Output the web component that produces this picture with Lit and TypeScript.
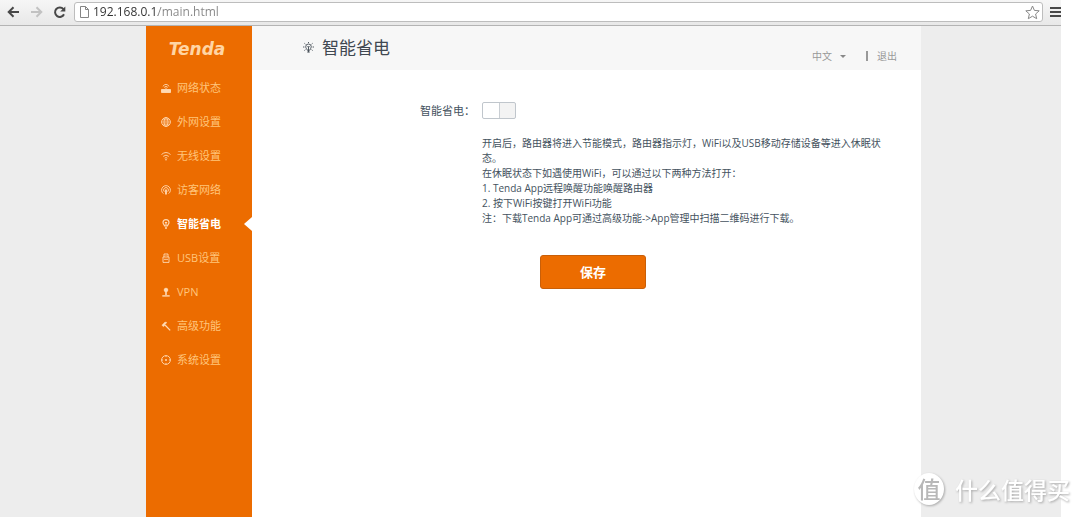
import { LitElement, html, css, svg } from "lit";
import { customElement, state } from "lit/decorators.js";
import { classMap } from "lit/directives/class-map.js";

const icons: Record<string, unknown> = {
  status: svg`<path d="M.5 6.5h9V9.5h-9z" fill="currentColor"/><path d="M5 6.5V4.6M1.8 3.4q3.2-4 6.4 0M3.2 4.4q1.8-2.2 3.6 0"/>`,
  wan: svg`<circle cx="5" cy="5" r="4.4"/><ellipse cx="5" cy="5" rx="2" ry="4.4"/><path d="M.6 5h8.8M5 .6v8.8M1.4 2.8h7.2M1.4 7.2h7.2" stroke-width=".5"/>`,
  wifi: svg`<path d="M.5 3.5q4.5-4 9 0M2.2 5.4q2.8-2.5 5.6 0M3.7 7.2q1.3-1.2 2.6 0"/><circle cx="5" cy="8.7" r=".8" fill="currentColor" stroke="none"/>`,
  guest: svg`<path d="M2.4 8.6a4.4 4.4 0 1 1 5.2 0M3.3 6.7a2.4 2.4 0 1 1 3.4 0"/><path d="M5 4.4v5" stroke-width="1.8"/>`,
  power: svg`<path d="M3.6 7C3.4 5.8 2 5.2 2 3.6a3 3 0 0 1 6 0C8 5.2 6.6 5.8 6.4 7zM5 3v3.8M4 3.2l1 1 1-1" stroke-width="1.1"/><path d="M4 9h2" stroke-width="1.3"/>`,
  usb: svg`<path d="M3 4V1h4v3M2 4h6v5.4H2zM4.2 2.5h.4M5.6 2.5h.4M3 6.3h4"/>`,
  vpn: svg`<circle cx="5" cy="3" r="1.8" fill="currentColor"/><path d="M5 4v4" stroke-width="1.6"/><path d="M1.3 8.9h7.4" stroke-width="1.4"/>`,
  advanced: svg`<path d="M.8 4.2 4 1l2 .5-2.1 1.9.1.8-1.5 1.5z" fill="currentColor" stroke-width=".4"/><path d="m4 4 5.2 5.4" stroke-width="1.2"/>`,
  system: svg`<circle cx="5" cy="5" r="4.4"/><circle cx="5" cy="5" r="1" fill="currentColor" stroke="none"/><path d="M5 .5v1.6M5 7.9v1.6M.5 5h1.6M7.9 5h1.6"/>`,
};

const menu: [string, string][] = [
  ["status", "网络状态"],
  ["wan", "外网设置"],
  ["wifi", "无线设置"],
  ["guest", "访客网络"],
  ["power", "智能省电"],
  ["usb", "USB设置"],
  ["vpn", "VPN"],
  ["advanced", "高级功能"],
  ["system", "系统设置"],
];

@customElement("browser-bar")
class BrowserBar extends LitElement {
  static styles = css`
    :host {
      display: flex;
      align-items: center;
      box-sizing: border-box;
      height: 26px;
      padding: 0 0 1px 5px;
      background: linear-gradient(#f6f6f6, #e8e8e8);
      border-bottom: 1px solid #b4b4b4;
    }
    button {
      display: flex;
      padding: 0;
      border: 0;
      background: none;
      color: #484848;
    }
    .nav {
      width: 23px;
      justify-content: center;
      padding-right: 7px;
    }
    .nav:disabled {
      color: #c2c2c2;
    }
    .field {
      display: flex;
      flex: 1;
      align-items: center;
      box-sizing: border-box;
      height: 20px;
      gap: 4px;
      padding: 0 2px 0 5px;
      background: #fff;
      border: 1px solid #bdbdbd;
      border-radius: 3px;
    }
    .url {
      flex: 1;
      min-width: 0;
      padding: 0;
      border: 0;
      outline: 0;
      font: 12px/18px "Open Sans", "Noto Sans", sans-serif;
      color: transparent;
      background: linear-gradient(90deg, #303030 65px, #858585 65px);
      background-clip: text;
      -webkit-background-clip: text;
    }
    .menu {
      width: 18px;
      padding-left: 7px;
    }
    .star {
      color: #888;
    }
  `;

  render() {
    return html`
      <button class="nav" aria-label="后退">
        <svg width="13" height="12" viewBox="0 0 13 12" fill="none" stroke="currentColor" stroke-width="2"><path d="M12 6H2M6.5 1.2 1.7 6l4.8 4.8" /></svg>
      </button>
      <button class="nav" aria-label="前进" disabled>
        <svg width="13" height="12" viewBox="0 0 13 12" fill="none" stroke="currentColor" stroke-width="2"><path d="M1 6h10M6.5 1.2 11.3 6l-4.8 4.8" /></svg>
      </button>
      <button class="nav" aria-label="刷新">
        <svg width="13" height="13" viewBox="0 0 13 13" fill="none" stroke="currentColor" stroke-width="2"><path d="M10.4 3.2A4.7 4.7 0 1 0 11 8.2" /><path d="M12.3.6v5H7.2z" fill="currentColor" stroke="none" /></svg>
      </button>
      <div class="field">
        <svg width="9" height="12" viewBox="0 0 9 12" fill="#fff" stroke="#858585"><path d="M.5.5h5l3 3v8h-8zM5.5.5v3h3" /></svg>
        <input class="url" aria-label="地址" value="192.168.0.1/main.html" />
        <button class="star" aria-label="收藏">
          <svg width="15" height="15" viewBox="0 0 15 15" fill="#fff" stroke="currentColor" stroke-linejoin="round"><path d="m7.5 1 1.9 4.4 4.8.4-3.6 3.2 1.1 4.7-4.2-2.5-4.2 2.5L4.4 9 .8 5.8l4.8-.4z" /></svg>
        </button>
      </div>
      <button class="menu" aria-label="菜单">
        <svg width="11" height="10" viewBox="0 0 11 10" stroke="currentColor" stroke-width="2"><path d="M0 1h11M0 5h11M0 9h11" /></svg>
      </button>
    `;
  }
}

@customElement("side-menu")
class SideMenu extends LitElement {
  @state() current = "power";

  static styles = css`
    :host {
      display: block;
      background: #ec6c00;
      color: #ffc57c;
      font: 11px/34px "Open Sans", "Noto Sans", "Noto Sans CJK SC", sans-serif;
    }
    .logo {
      display: flex;
      justify-content: center;
      height: 45px;
      padding-right: 4px;
      font: italic 700 17px/46px "DejaVu Sans", sans-serif;
      color: #ffd5a4;
    }
    ul {
      margin: 0;
      padding: 0;
      list-style: none;
    }
    .item {
      display: flex;
      position: relative;
      align-items: center;
      gap: 6px;
      padding-left: 15px;
      color: inherit;
      text-decoration: none;
    }
    .active {
      color: #fff;
      font-weight: 700;
    }
    .active::after {
      content: "";
      position: absolute;
      right: 0;
      top: 10px;
      border: solid transparent;
      border-width: 7px 8px 7px 0;
      border-right-color: #fff;
    }
    .icon {
      width: 10px;
      height: 10px;
      fill: none;
      stroke: currentColor;
      stroke-width: 0.9;
      color: #ffdab4;
    }
  `;

  render() {
    return html`
      <div class="logo">Tenda</div>
      <nav>
        <ul>
          ${menu.map(
            ([id, label]) => html`<li>
              <a class=${classMap({ item: true, active: id === this.current })} href="#${id}" @click=${() => (this.current = id)}>
                <svg class="icon" viewBox="0 0 10 10">${icons[id]}</svg>${label}
              </a>
            </li>`
          )}
        </ul>
      </nav>
    `;
  }
}

@customElement("power-saving")
class PowerSaving extends LitElement {
  static styles = css`
    :host {
      display: block;
      background: #fff;
      color: #44525e;
      font: 10px/15px "Open Sans", "Noto Sans", "Noto Sans CJK SC", sans-serif;
    }
    header {
      display: flex;
      box-sizing: border-box;
      height: 44px;
      padding: 0 24px 0 51px;
      background: #f7f7f7;
      color: #999;
    }
    h1 {
      display: flex;
      flex: 1;
      align-items: center;
      gap: 8px;
      margin: 0;
      color: #404851;
      font-size: 17px;
      font-weight: 400;
      line-height: 44px;
    }
    .tools {
      display: flex;
      align-items: center;
      padding-top: 16px;
    }
    .lang {
      display: flex;
      align-items: center;
    }
    select {
      width: 28px;
      padding: 0;
      border: 0;
      appearance: none;
      background: none;
      color: inherit;
      font: inherit;
    }
    .caret {
      border: solid transparent;
      border-width: 3px 3px 0;
      border-top-color: #888;
    }
    .exit {
      margin-left: 20px;
      padding-left: 9px;
      border-left: 2px solid #999;
      line-height: 10px;
      color: inherit;
      text-decoration: none;
    }
    form {
      display: grid;
      grid-template-columns: 223px minmax(0, 410px);
      column-gap: 7px;
      padding-top: 32px;
    }
    label {
      font-size: 11px;
      line-height: 18px;
      text-align: right;
    }
    .switch {
      appearance: none;
      box-sizing: border-box;
      width: 34px;
      height: 17px;
      margin: 0;
      border: 1px solid #c0c6cc;
      border-radius: 2px;
      background: linear-gradient(90deg, #fff 16px, #c9ced3 16px, #c9ced3 17px, #f3f3f3 17px);
    }
    .switch:checked {
      background: linear-gradient(90deg, #ec6c00 16px, #fff 16px);
    }
    .hint {
      grid-column: 2;
      padding-top: 16px;
    }
    .hint p {
      margin: 0;
    }
    .save {
      grid-column: 2;
      justify-self: start;
      width: 106px;
      height: 34px;
      margin: 29px 0 0 58px;
      padding: 0;
      border: 1px solid #c95f08;
      border-radius: 3px;
      background: #ec6c00;
      color: #fff;
      font: 700 13px/30px "Noto Sans CJK SC", sans-serif;
    }
  `;

  render() {
    return html`
      <header>
        <h1>
          <svg width="11" height="12" viewBox="0 0 11 12" fill="none" stroke="currentColor" stroke-width=".9">
            <path d="M4.2 8.2C4 7 2.7 6.2 2.7 4.8a2.8 2.8 0 0 1 5.6 0C8.3 6.2 7 7 6.8 8.2zM5.5 4.5v5.7M4.5 4.2l1 1 1-1" />
            <path d="M4.2 10h2.6M5.5 0v1M0 5h1.4M9.6 5H11M1.4 1.3l1 .9M9.6 1.3l-1 .9M1.4 8.5l1-.8M9.6 8.5l-1-.8" />
          </svg>
          智能省电
        </h1>
        <div class="tools">
          <span class="lang"><select aria-label="语言"><option>中文</option><option>English</option></select><span class="caret"></span></span>
          <a class="exit" href="#logout">退出</a>
        </div>
      </header>
      <form @submit=${(e: Event) => e.preventDefault()}>
        <label for="saving">智能省电：</label>
        <input id="saving" class="switch" type="checkbox" />
        <div class="hint">
          <p>开启后，路由器将进入节能模式，路由器指示灯，WiFi以及USB移动存储设备等进入休眠状态。</p>
          <p>在休眠状态下如遇使用WiFi，可以通过以下两种方法打开：</p>
          <p>1. Tenda App远程唤醒功能唤醒路由器</p>
          <p>2. 按下WiFi按键打开WiFi功能</p>
          <p>注：下载Tenda App可通过高级功能-&gt;App管理中扫描二维码进行下载。</p>
        </div>
        <button class="save">保存</button>
      </form>
    `;
  }
}

@customElement("app-root")
class AppRoot extends LitElement {
  static styles = css`
    :host {
      display: flex;
      flex-direction: column;
      position: relative;
      box-sizing: border-box;
      min-height: 100vh;
      padding-right: 19px;
      background: #fff;
    }
    main {
      display: grid;
      flex: 1;
      grid-template-columns: 106px minmax(0, 1fr);
      padding: 0 140px 0 146px;
      background: #ededed;
    }
    .mark {
      display: flex;
      position: absolute;
      right: 10px;
      bottom: 10px;
      align-items: center;
      gap: 11px;
      color: #fff;
      font: 500 23px/36px "Noto Sans CJK SC", sans-serif;
      filter: drop-shadow(1px 1px 1px #aaa);
    }
    .seal {
      width: 30px;
      height: 32px;
      border-radius: 50%;
      background: #fff;
      color: #b8b8b8;
      line-height: 30px;
      text-align: center;
    }
  `;

  render() {
    return html`
      <browser-bar></browser-bar>
      <main>
        <side-menu></side-menu>
        <power-saving></power-saving>
      </main>
      <div class="mark"><span class="seal">值</span><span>什么值得买</span></div>
    `;
  }
}
